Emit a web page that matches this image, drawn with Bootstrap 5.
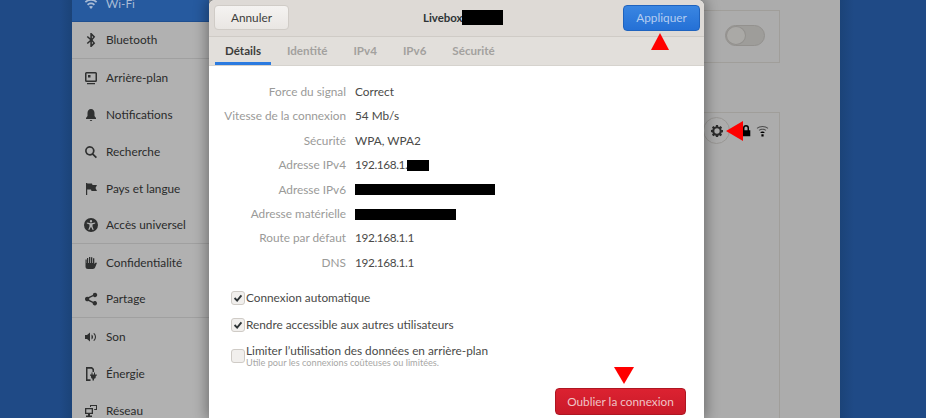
<!DOCTYPE html>
<html lang="fr"><head><meta charset="utf-8"><title>Paramètres</title>
<link href="https://cdn.jsdelivr.net/npm/bootstrap@5.3.0/dist/css/bootstrap.min.css" rel="stylesheet">
<style>
html,body{height:418px;overflow:hidden}
body{background:#1f4a86;font-family:Lato,"Noto Sans","Liberation Sans",sans-serif;font-size:11.8px;color:#2e3436;position:relative}
.desk-shade{background:linear-gradient(90deg,#1f4a86 0,#1f4a86 60px,#1b4378 72px);width:72px;flex:none}
.desk-shade-r{background:linear-gradient(90deg,#1b4378 0,#1f4a86 14px);flex:1}
.win{width:768px;flex:none;overflow:hidden}
.side{width:137px;flex:none;background:#b1b1b1;margin-top:-14px;display:block;height:450px}
.side-row{height:37px;padding:0 0 0 12px;gap:8px;background:transparent;border:0;color:#2a2b2b;font-size:11.8px;border-radius:0;white-space:nowrap}
.side-row svg{width:14px;height:14px;flex:none;fill:#2f3030}
.side-row.on{height:36px;background:#265a9f;color:#a9bcd6;border-bottom:1px solid #1f4f90}
.side-row.on svg{fill:#a9bcd6}
.side-row.sep{border-bottom:1px solid #a0a0a0}
.side-row.list-group-item.on{z-index:0}
.main-pane{background:#acacac;flex:1;position:relative}
.pane-box{position:absolute;left:0;width:571px;border:1px solid #a09e9a;background:#acacac}
.box-a{top:10px;height:53px}
.box-b{top:112px;height:320px}
.tog{position:absolute;left:515px;top:14px;width:40px;height:21px;border-radius:11px;background:#9e9d9a;border:1px solid #93918e}
.tog span{display:block;width:20px;height:19px;border-radius:50%;background:#aaa9a6;border:1px solid #93918e}
.gear-ring{position:absolute;left:493px;top:4px;width:27px;height:27px;border-radius:50%;border:1px solid #999794;display:flex;align-items:center;justify-content:center}
.mini{position:absolute;fill:#000}
.dlg{position:absolute;left:209px;top:0;width:495px;height:418px;background:#fff;border-radius:6px 6px 0 0;box-shadow:0 0 14px 2px rgba(0,0,0,.38)}
.dlg-head{height:37px;background:#dedad6;border-bottom:1px solid #cfcbc6;padding:5px 4px 5px 5px;border-radius:6px 6px 0 0}
.btn-cancel{width:75px;height:25px;padding:0;font-size:11.8px;color:#3d3d3b;background:linear-gradient(#f5f3f1,#e9e6e3);border:1px solid #d0ccc7;border-radius:4px}
.btn-apply{width:77px;height:26px;padding:0;font-size:11.8px;color:#b4cdf0;background:linear-gradient(#3a86e2,#2470d6);border:1px solid #1f63be;border-radius:4px}
.dlg-title{font-weight:700;font-size:11.4px;color:#2e3436;position:absolute;left:214px;top:10px;line-height:15px}
.ink{display:inline-block;background:#000;vertical-align:top}
.dlg-tabs{height:29px;background:#e2dfdb;border-bottom:1px solid #d6d3ce;padding-left:6px}
.dlg-tabs .nav-link{height:28px;padding:5px 10px 0;margin-right:6px;font-size:11.6px;font-weight:700;color:#a3a19e;border-bottom:3px solid transparent;line-height:17px}
.dlg-tabs .nav-link.active{color:#3d3d3b;border-bottom-color:#2b7be0}
.info-grid{display:grid;grid-template-columns:137px 1fr;column-gap:9px;grid-auto-rows:24.4px;padding-top:14px;line-height:24.4px}
.info-grid dt{font-weight:400;color:#9a9a98;text-align:right;margin:0}
.info-grid dd{margin:0;color:#4a4a48;display:flex;align-items:center}
.info-grid dd.num-val{letter-spacing:-.38px}
.checks{padding:0 0 0 22px;margin-top:9px}
.checks .form-check{padding:0;margin:0;min-height:0;display:flex;gap:1px;color:#4a4a48;align-items:center}
.checks .form-check-input{float:none;margin:0;width:14px;height:14px;flex:none;border:1px solid #cfcbc6;border-radius:3px;background-color:#f1efed;box-shadow:none}
.checks .form-check-input:checked{background-color:#f1efed;border-color:#cfcbc6;background-image:url("data:image/svg+xml,%3csvg xmlns='http://www.w3.org/2000/svg' viewBox='0 0 14 14'%3e%3cpath fill='none' stroke='%232e3436' stroke-width='2.2' d='M3 7l3 3 5-6'/%3e%3c/svg%3e")}
.check-a{height:27px}.check-b{height:27px}
.checks .check-c{margin-top:6px}
.sub-note{font-size:9.2px;color:#a8a8a6;line-height:10px}
.check-label{line-height:14px}
.btn-forget{position:absolute;left:346px;top:388px;width:131px;height:27px;padding:0;font-size:11.8px;color:#efc4c6;background:linear-gradient(#dc2231,#c91a29);border:1px solid #ae1622;border-radius:4px}
.mark-tri{position:absolute;width:0;height:0}
.t-up{left:442px;top:33px;border-left:9px solid transparent;border-right:9px solid transparent;border-bottom:17px solid #f00}
.t-down{left:405px;top:367px;border-left:10px solid transparent;border-right:10px solid transparent;border-top:17px solid #f00}
.t-left{left:726px;top:121px;border-top:10px solid transparent;border-bottom:10px solid transparent;border-right:17px solid #f00}
</style></head>
<body>
<div class="d-flex h-100">
  <div class="desk-shade"></div>
  <div class="win d-flex">
    <div class="side list-group list-group-flush">
      <div class="list-group-item side-row on d-flex align-items-center"><svg viewBox="0 0 14 14"><path d="M7 2C4.500 2 2.300 3 .8 4.500l1.200 1.200C3.200 4.500 5 3.700 7 3.700s3.800.8 5 2l1.200-1.200C11.700 3 9.500 2 7 2zM7 5.500c-1.600 0-3 .6-4 1.700l1.200 1.200C5 7.700 5.900 7.300 7 7.300s2 .4 2.800 1.100L11 7.200C10 6.100 8.600 5.500 7 5.500zM7 9c-.8 0-1.500.3-2 .8L7 12l2-2.200C8.500 9.300 7.800 9 7 9z"/></svg>Wi-Fi</div>
      <div class="list-group-item side-row sep d-flex align-items-center"><svg viewBox="0 0 14 14"><path d="M6.300 0v5.300L3.800 2.900 2.800 4l3.300 3-3.300 3 1 1.100 2.500-2.400V14h1.200L11.200 10.300 8.600 7l2.600-3.300L7.500 0zM7.900 2.700l1.300 1.200-1.300 1.500zM7.900 8.600l1.300 1.500-1.300 1.200z"/></svg>Bluetooth</div>
      <div class="list-group-item side-row d-flex align-items-center"><svg viewBox="0 0 14 14"><path fill-rule="evenodd" d="M2.500 1h9A1.500 1.500 0 0 1 13 2.500v7A1.500 1.500 0 0 1 11.500 11h-9A1.500 1.500 0 0 1 1 9.500v-7A1.500 1.500 0 0 1 2.500 1zM2.500 2.500v7h9v-7zM3 12h8v1.300H3zM4 4h2.500v2.500H4z"/></svg>Arrière-plan</div>
      <div class="list-group-item side-row d-flex align-items-center"><svg viewBox="0 0 14 14"><path d="M7 1C4.800 1 3.500 2.700 3.500 5v3L2 10v1h10v-1L10.500 8V5C10.500 2.700 9.200 1 7 1zM5.700 12a1.400 1.400 0 0 0 2.600 0z"/></svg>Notifications</div>
      <div class="list-group-item side-row d-flex align-items-center"><svg viewBox="0 0 14 14"><path fill-rule="evenodd" d="M5.800 1a4.800 4.800 0 0 1 3.800 7.700l3.400 3.400-1.200 1.200-3.400-3.400A4.800 4.800 0 1 1 5.800 1zm0 1.700a3.100 3.100 0 1 0 0 6.200 3.100 3.100 0 0 0 0-6.200z"/></svg>Recherche</div>
      <div class="list-group-item side-row d-flex align-items-center"><svg viewBox="0 0 14 14"><path d="M2 1h1.200v12H2zM3.200 1.500H8L8.500 3H13L11.500 6 13 9H7.500L7 7.500H3.200z"/></svg>Pays et langue</div>
      <div class="list-group-item side-row sep d-flex align-items-center"><svg viewBox="0 0 14 14"><path fill-rule="evenodd" d="M7 0a7 7 0 1 1 0 14A7 7 0 0 1 7 0zM7 2a1.200 1.200 0 1 0 0 2.400A1.200 1.200 0 0 0 7 2zM2.800 4.500v1.100l2.700.8v2L4.300 11.700l1 .4L7 8.800l1.700 3.300 1-.4L8.500 8.400v-2l2.700-.8V4.500L7 5.300z"/></svg>Accès universel</div>
      <div class="list-group-item side-row d-flex align-items-center"><svg viewBox="0 0 14 14"><path d="M3 2h1.200v5H5V1h1.300v6H7V1.200h1.300V7H9V2.200h1.300V8l1-1.200h1.700L11.500 10.500A3 3 0 0 1 9 13H4a2.500 2.500 0 0 1-2.500-2.500V3.500H2.700V7H3z"/></svg>Confidentialité</div>
      <div class="list-group-item side-row sep d-flex align-items-center"><svg viewBox="0 0 14 14"><path d="M11 .8a2.200 2.200 0 1 1-1.800 3.500L5.200 6.300a2 2 0 0 1 0 1.400l4 2a2.200 2.200 0 1 1-.6 1.300L4.400 9a2.300 2.300 0 1 1 0-4L8.800 3A2.200 2.200 0 0 1 11 .8z"/></svg>Partage</div>
      <div class="list-group-item side-row d-flex align-items-center"><svg viewBox="0 0 14 14"><path d="M1 5h2l3-2.500v9L3 9H1zM7.500 4.500c1 .6 1.500 1.500 1.500 2.500s-.5 1.900-1.500 2.500zM10 3c1.300 1 2 2.500 2 4s-.7 3-2 4l-.6-.7c1-.9 1.500-2 1.500-3.300S10.400 4.600 9.400 3.700z"/></svg>Son</div>
      <div class="list-group-item side-row d-flex align-items-center"><svg viewBox="0 0 14 14"><path fill-rule="evenodd" d="M2 0h6l2 2v3H8.500V2.700L7.500 1.700h-4v10.600h3V14H2zM10 5.500h1V7.500h1.800v1.200h-1V10a1.800 1.800 0 0 1-1.800 1.800V13.500H8.500v-1.700A1.800 1.800 0 0 1 7 10V8.700H6V7.500h1.500V5.500h1v2H10z"/></svg>Énergie</div>
      <div class="list-group-item side-row d-flex align-items-center"><svg viewBox="0 0 14 14"><path fill-rule="evenodd" d="M1 4h8v6H6v1.500h2V13H2v-1.500h2V10H1zM2.300 5.200v3.600h5.400V5.200zM6 1h7v5h-2.800V5H12V2H7v1H6z"/></svg>Réseau</div>
    </div>
    <div class="main-pane">
      <div class="pane-box box-a"><div class="tog"><span></span></div></div>
      <div class="pane-box box-b">
        <div class="gear-ring"><svg width="12" height="12" viewBox="0 0 14 14"><path fill="#2c2c2c" fill-rule="evenodd" d="M5.800 0h2.400l.3 1.900 1.100.5 1.600-1.100 1.700 1.700-1.100 1.600.5 1.100 1.900.3v2.400l-1.900.3-.5 1.100 1.100 1.600-1.700 1.700-1.600-1.100-1.100.5-.3 1.900H5.800l-.3-1.900-1.100-.5-1.600 1.100-1.700-1.700 1.100-1.600-.5-1.100L-.2 8.200V5.800l1.900-.3.5-1.100L1.100 2.800l1.700-1.700 1.600 1.100 1.100-.5zM7 3.900a3.100 3.100 0 1 0 0 6.200 3.100 3.100 0 0 0 0-6.200z"/></svg></div>
        <svg class="mini" style="left:531px;top:12px" width="10" height="12" viewBox="0 0 10 14"><path fill-rule="evenodd" d="M5 0a3.500 3.500 0 0 1 3.500 3.500V6H10v7H0V6h1.500V3.500A3.500 3.500 0 0 1 5 0zm0 1.700a1.800 1.800 0 0 0-1.800 1.800V6h3.600V3.500A1.800 1.800 0 0 0 5 1.700z"/></svg>
        <svg class="mini" style="left:546px;top:12px" width="13" height="12" viewBox="0 0 14 13"><path opacity=".55" d="M7 1C4.500 1 2.300 1.900.7 3.300l.8.8C3 2.900 4.900 2.100 7 2.100s4 .8 5.500 2l.8-.8C11.700 1.900 9.500 1 7 1zM7 4C5.400 4 4 4.500 2.900 5.400l.8.8C4.600 5.500 5.700 5.100 7 5.100s2.400.4 3.300 1.100l.8-.8C10 4.500 8.600 4 7 4z"/><path d="M7 7c-1 0-1.800.3-2.500.8l.9 1h3.200l.9-1C8.800 7.300 8 7 7 7zM5.800 10h2.400v2.500H5.800z"/></svg>
      </div>
    </div>
  </div>
  <div class="desk-shade-r"></div>
</div>

<div class="dlg">
  <div class="dlg-head d-flex justify-content-between align-items-start">
    <button class="btn btn-cancel" type="button">Annuler</button>
    <div class="dlg-title">Livebox<span class="ink" style="width:41px;height:15px"></span></div>
    <button class="btn btn-apply" type="button">Appliquer</button>
  </div>
  <div class="dlg-tabs nav">
    <a class="nav-link active" href="#">Détails</a>
    <a class="nav-link" href="#">Identité</a>
    <a class="nav-link" href="#">IPv4</a>
    <a class="nav-link" href="#">IPv6</a>
    <a class="nav-link" href="#">Sécurité</a>
  </div>
  <dl class="info-grid mb-0">
    <dt>Force du signal</dt><dd>Correct</dd>
    <dt>Vitesse de la connexion</dt><dd>54 Mb/s</dd>
    <dt>Sécurité</dt><dd>WPA, WPA2</dd>
    <dt>Adresse IPv4</dt><dd class="num-val">192.168.1.<span class="ink" style="width:22px;height:11px"></span></dd>
    <dt>Adresse IPv6</dt><dd><span class="ink" style="width:140px;height:11px"></span></dd>
    <dt>Adresse matérielle</dt><dd><span class="ink" style="width:101px;height:11px"></span></dd>
    <dt>Route par défaut</dt><dd class="num-val">192.168.1.1</dd>
    <dt>DNS</dt><dd class="num-val">192.168.1.1</dd>
  </dl>
  <div class="checks">
    <div class="form-check check-a"><input class="form-check-input" type="checkbox" checked id="c1"><label class="check-label" for="c1">Connexion automatique</label></div>
    <div class="form-check check-b"><input class="form-check-input" type="checkbox" checked id="c2"><label class="check-label" for="c2">Rendre accessible aux autres utilisateurs</label></div>
    <div class="form-check check-c"><input class="form-check-input" type="checkbox" id="c3"><label class="check-label" for="c3">Limiter l’utilisation des données en arrière-plan<div class="sub-note">Utile pour les connexions coûteuses ou limitées.</div></label></div>
  </div>
  <button class="btn btn-forget" type="button">Oublier la connexion</button>
  <div class="mark-tri t-up"></div>
  <div class="mark-tri t-down"></div>
</div>
<div class="mark-tri t-left"></div>
</body></html>
